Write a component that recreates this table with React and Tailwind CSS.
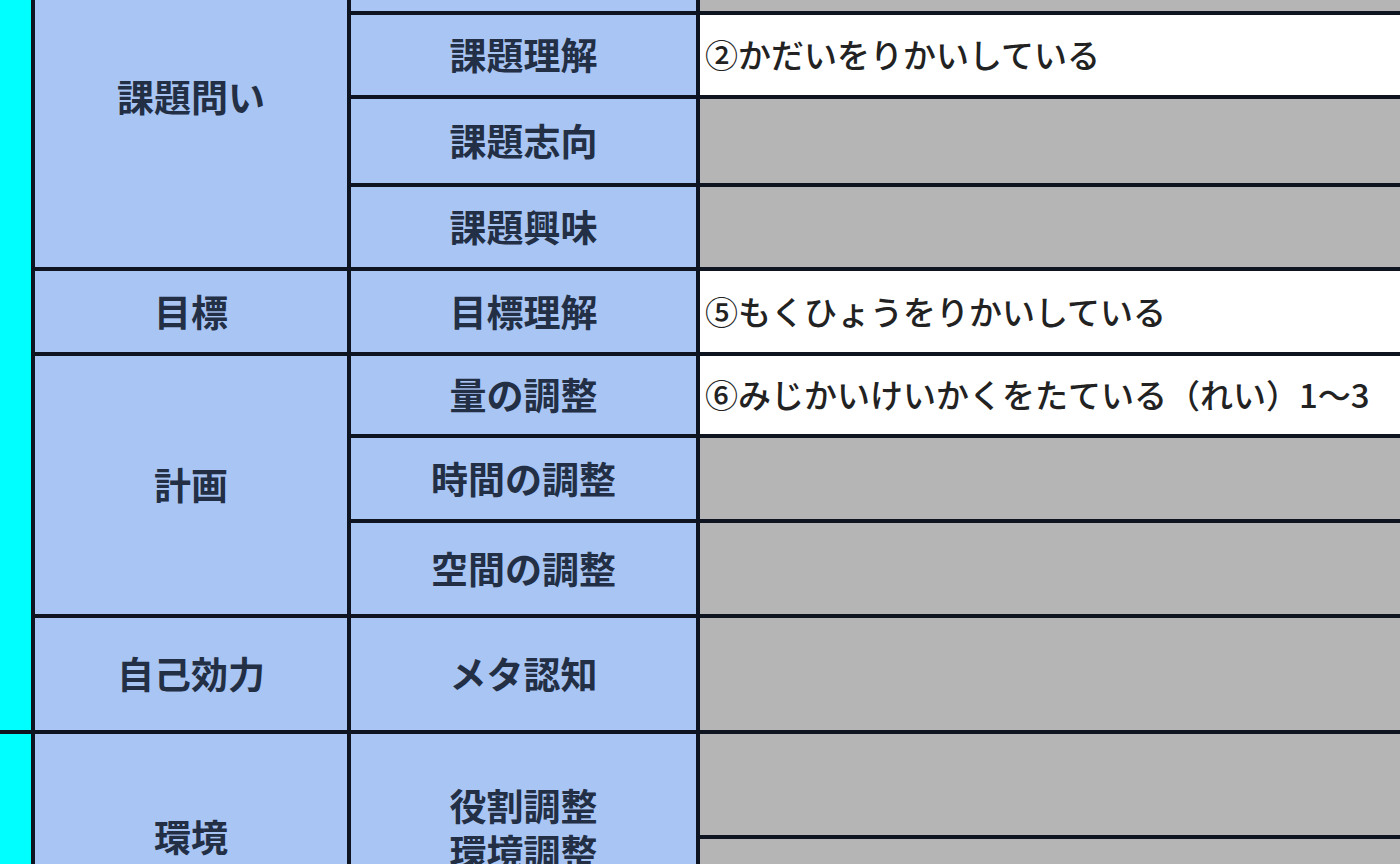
import React from "react";

const rows = [
  { label: "", text: null },
  { label: "課題理解", text: "②かだいをりかいしている" },
  { label: "課題志向", text: null },
  { label: "課題興味", text: null },
  { label: "目標理解", text: "⑤もくひょうをりかいしている" },
  { label: "量の調整", text: "⑥みじかいけいかくをたている（れい）1～3" },
  { label: "時間の調整", text: null },
  { label: "空間の調整", text: null },
  { label: "メタ認知", text: null },
];

const rowStart = [
  "row-start-1",
  "row-start-2",
  "row-start-3",
  "row-start-4",
  "row-start-5",
  "row-start-6",
  "row-start-7",
  "row-start-8",
  "row-start-9",
];

const font = { fontFamily: '"Noto Sans CJK JP", "Noto Sans", sans-serif' };

const Label = ({ className = "", children }) => (
  <div
    className={`flex items-center justify-center bg-[#a9c5f4] text-[37px] font-bold text-[#222f45] ${className}`}
  >
    {children}
  </div>
);

export default function App() {
  return (
    <div className="h-[864px] w-[1400px] overflow-hidden bg-white" style={font}>
      <div className="-mt-[73px] grid grid-cols-[31px_312px_345px_700px] grid-rows-[84px_80px_84px_80px_81px_78px_81px_91px_112px_101px_100px] gap-[4px] bg-[#0e1420]">
        {/* left strip */}
        <div className="col-start-1 row-start-1 row-span-9 bg-[#00ffff]" />
        <div className="col-start-1 row-start-10 row-span-2 bg-[#00ffff]" />

        {/* category column */}
        <Label className="col-start-2 row-start-1 row-span-4">課題問い</Label>
        <Label className="col-start-2 row-start-5">目標</Label>
        <Label className="col-start-2 row-start-6 row-span-3">計画</Label>
        <Label className="col-start-2 row-start-9">自己効力</Label>
        <Label className="col-start-2 row-start-10 row-span-2">環境</Label>

        {/* item column + answer column */}
        {rows.map((r, i) => (
          <React.Fragment key={i}>
            <Label className={`col-start-3 ${rowStart[i]}`}>{r.label}</Label>
            {r.text ? (
              <div
                className={`col-start-4 ${rowStart[i]} flex items-center overflow-hidden whitespace-nowrap bg-white pl-[5px] text-[33px] font-medium text-[#222]`}
              >
                {r.text}
              </div>
            ) : (
              <div className={`col-start-4 ${rowStart[i]} bg-[#b5b5b5]`} />
            )}
          </React.Fragment>
        ))}

        <Label className="col-start-3 row-start-10 row-span-2 flex-col pb-[18px] leading-[46px]">
          <span>役割調整</span>
          <span>環境調整</span>
        </Label>
        <div className="col-start-4 row-start-10 bg-[#b5b5b5]" />
        <div className="col-start-4 row-start-11 bg-[#b5b5b5]" />
      </div>
    </div>
  );
}
